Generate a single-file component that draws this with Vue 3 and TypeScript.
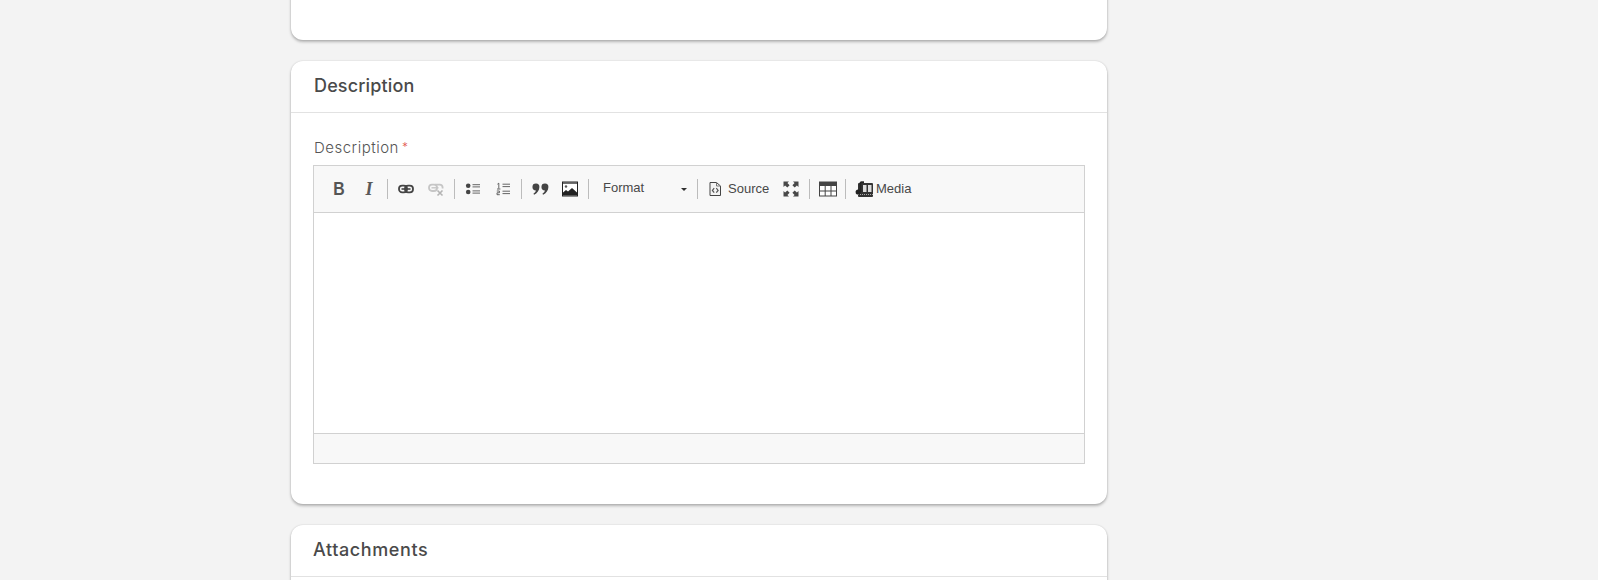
<script setup lang="ts">
const title = 'Description'
</script>

<template>
  <main class="page">
    <section class="card card-prev"></section>

    <section class="card card-desc">
      <header class="card-head">{{ title }}</header>
      <div class="card-body">
        <label class="field-label">Description<span class="req">*</span></label>
        <div class="editor">
          <div class="toolbar">
            <span class="btn glyph bold">B</span>
            <span class="btn glyph italic">I</span>
            <i class="sep"></i>
            <span class="btn">
              <svg width="16" height="16" viewBox="0 0 16 16"><rect x="1" y="4.600" width="8" height="6.800" rx="3.200" fill="none" stroke="#444" stroke-width="1.800"/><rect x="7" y="4.600" width="8" height="6.800" rx="3.200" fill="none" stroke="#444" stroke-width="1.800"/><path d="M3.500 8h9" stroke="#444" stroke-width="1.600"/></svg>
            </span>
            <span class="btn">
              <svg width="16" height="16" viewBox="0 0 16 16"><rect x="1" y="3.600" width="8" height="6.400" rx="3" fill="none" stroke="#c6c6c6" stroke-width="1.800"/><path d="M7 3.600h4.600a3 3 0 0 1 3 3v1" fill="none" stroke="#c6c6c6" stroke-width="1.800"/><path d="M3.500 6.800h7" stroke="#c6c6c6" stroke-width="1.400"/><path d="M9.500 9.500l5 5M14.500 9.500l-5 5" stroke="#b4b4b4" stroke-width="1.600"/></svg>
            </span>
            <i class="sep"></i>
            <span class="btn">
              <svg width="16" height="16" viewBox="0 0 16 16"><circle cx="3.200" cy="4.800" r="2.300" fill="#444"/><circle cx="3.200" cy="11" r="2.300" fill="#444"/><path d="M7.500 3.700h7.500M7.500 5.900h7.500M7.500 9.900h7.500M7.500 12.100h7.500" stroke="#666" stroke-width="1"/></svg>
            </span>
            <span class="btn">
              <svg width="16" height="16" viewBox="0 0 16 16"><path d="M2.400 3.200l1.400-1v5.400M2 8h3.400M1.800 10h2.600v1.800H2v1.900h2.800" fill="none" stroke="#555" stroke-width=".9"/><path d="M7.500 3.200h7.500M7.500 5.600h7.500M7.500 10.200h7.500M7.500 12.600h7.500" stroke="#666" stroke-width="1"/></svg>
            </span>
            <i class="sep"></i>
            <span class="btn">
              <svg width="17" height="16" viewBox="0 0 17 16"><path d="M3.900 2.600a3.400 3.400 0 0 1 3.500 3.500c0 3.400-2.200 6.300-5.300 7.700l-.7-1c1.400-1 2.200-2.100 2.500-3.300A3.400 3.400 0 0 1 3.900 2.600zM12.900 2.600a3.400 3.400 0 0 1 3.500 3.500c0 3.400-2.200 6.300-5.300 7.700l-.7-1c1.400-1 2.200-2.100 2.500-3.300a3.400 3.400 0 0 1 0-6.900z" fill="#444"/></svg>
            </span>
            <span class="btn">
              <svg width="16" height="16" viewBox="0 0 16 16"><rect x=".5" y="1" width="15" height="14" fill="#fff" stroke="#222"/><rect x="1" y="1.500" width="14" height="1.200" fill="#333"/><circle cx="4" cy="5.500" r="1.200" fill="#555"/><path d="M1 14.500v-3l3-2.500 2 1.500 4-3.500 5 4.500v3z" fill="#222"/></svg>
            </span>
            <i class="sep"></i>
            <div class="combo">
              <span class="combo-text">Format</span>
              <i class="caret"></i>
            </div>
            <i class="sep"></i>
            <span class="btn btn-text source">
              <svg width="16" height="16" viewBox="0 0 16 16"><path d="M3 1.500h6.500L13.500 5v9.500H3z" fill="#f4f4f4" stroke="#444"/><path d="M9.500 1.500V5h4" fill="none" stroke="#777"/><path d="M7.200 7.200L5.400 9.400l1.800 2.200M9.300 7.200l1.800 2.200-1.800 2.200" fill="none" stroke="#555" stroke-width="1.200"/></svg>
              <span>Source</span>
            </span>
            <span class="btn">
              <svg width="16" height="16" viewBox="0 0 16 16"><path d="M.5.5h5.500L4.400 2.100l2.200 2.200-2.300 2.300-2.200-2.200L.5 6zM15.500.5V6l-1.600-1.600-2.200 2.200-2.300-2.300 2.200-2.200L10 .5zM.5 15.500V10l1.600 1.600 2.200-2.200 2.300 2.300-2.200 2.200L6 15.500zM15.500 15.500H10l1.600-1.600-2.200-2.200 2.300-2.300 2.200 2.200L15.500 10z" fill="#484848"/></svg>
            </span>
            <i class="sep"></i>
            <span class="btn narrow">
              <svg width="18" height="16" viewBox="0 0 18 16"><rect x=".5" y="1" width="17" height="14" fill="#fff" stroke="#444"/><rect x=".5" y="1" width="17" height="4" fill="#444"/><path d="M6.200 5v10M12 5v10M1 10h16" stroke="#444"/></svg>
            </span>
            <i class="sep"></i>
            <span class="btn btn-text media">
              <svg width="18" height="17" viewBox="0 0 18 17"><rect x="3" y="2" width="15" height="14" rx="1" fill="#333"/><path d="M8 4h3.500v7H8zM13 4h3.500v7H13z" fill="#ddd"/><path d="M3 13.500h15" stroke="#aaa" stroke-dasharray="1 1"/><path d="M5.500 1v10" stroke="#222" stroke-width="1.600"/><path d="M5.500 1.200h3.500" stroke="#222" stroke-width="1.800"/><circle cx="3.200" cy="11" r="2.600" fill="#222"/></svg>
              <span>Media</span>
            </span>
          </div>
          <div class="content"></div>
          <div class="statusbar"></div>
        </div>
      </div>
    </section>

    <section class="card card-next">
      <header class="card-head head-attach">Attachments</header>
    </section>
  </main>
</template>

<style>
html, body { margin: 0; background: #f3f3f3; overflow: hidden; height: 580px; }
</style>

<style scoped>
.page {
  width: 816px;
  margin-left: 291px;
  display: flex;
  flex-direction: column;
  gap: 21px;
  height: 580px;
  overflow: visible;
  font-family: Inter, "Open Sans", sans-serif;
}
.card {
  flex: none;
  box-sizing: border-box;
  background: #fff;
  border-radius: 12px;
  box-shadow: 0 2px 3px rgba(0, 0, 0, .26), 0 0 2px rgba(0, 0, 0, .14);
}
.card-prev { height: 80px; margin-top: -40px; }
.card-desc { height: 443px; }
.card-next { height: 120px; }
.card-head {
  box-sizing: border-box;
  height: 52px;
  padding: 13px 23px 0;
  border-bottom: 1px solid #e2e2e2;
  font-size: 18px;
  line-height: 24px;
  font-weight: 500;
  color: #4a4a4a;
  letter-spacing: .15px;
}
.head-attach { letter-spacing: .6px; padding-left: 22px; }
.card-body { padding: 24px 22px 0; }
.field-label {
  display: block;
  font-size: 15px;
  line-height: 20px;
  font-weight: 300;
  color: #555;
  letter-spacing: .5px;
  margin-bottom: 7px;
  padding-left: 1px;
}
.req { color: #e2574c; margin-left: 3px; font-size: 12px; vertical-align: 2px; }
.editor {
  box-sizing: border-box;
  height: 299px;
  border: 1px solid #d1d1d1;
  display: flex;
  flex-direction: column;
  font-family: "Liberation Sans", Arial, sans-serif;
}
.toolbar {
  box-sizing: border-box;
  height: 47px;
  flex: none;
  display: flex;
  align-items: center;
  padding: 0 0 0 10px;
  background: #f8f8f8;
  border-bottom: 1px solid #d1d1d1;
}
.btn {
  flex: none;
  width: 30px;
  height: 20px;
  display: flex;
  align-items: center;
  justify-content: center;
  color: #484848;
}
.narrow { width: 29px; }
.sep {
  flex: none;
  width: 1px;
  height: 20px;
  margin: 0 3px;
  background: #bcbcbc;
}
.glyph { font-size: 18px; line-height: 20px; color: #555; }
.bold { font-family: "Liberation Sans", sans-serif; font-weight: 700; transform: scaleX(.88); }
.italic { font-family: "Liberation Serif", serif; font-style: italic; font-weight: 700; color: #5a5a5a; }
.combo {
  flex: none;
  box-sizing: border-box;
  width: 102px;
  display: flex;
  align-items: center;
  justify-content: space-between;
  padding: 0 7px 0 11px;
  font-size: 13px;
  color: #484848;
}
.combo-text { position: relative; top: -2px; }
.caret {
  width: 0;
  height: 0;
  border-left: 3.5px solid transparent;
  border-right: 3.5px solid transparent;
  border-top: 3.5px solid #2f2f2f;
}
.btn-text {
  justify-content: flex-start;
  padding-left: 6px;
  box-sizing: border-box;
  gap: 5px;
  font-size: 13px;
}
.btn-text span { position: relative; top: -1px; }
.source { width: 75px; }
.media { width: 70px; padding-left: 5px; gap: 3px; margin-left: 1px; }
.content { flex: 1; background: #fff; }
.statusbar {
  box-sizing: border-box;
  height: 30px;
  flex: none;
  background: #f8f8f8;
  border-top: 1px solid #d1d1d1;
}
</style>
